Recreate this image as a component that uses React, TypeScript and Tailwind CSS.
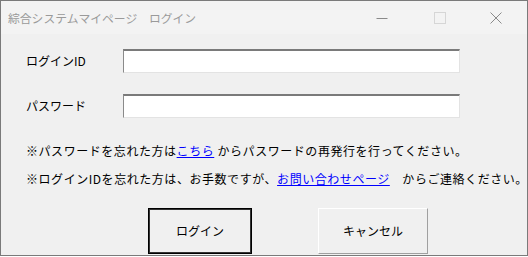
import React from 'react';

const font = { fontFamily: '"Noto Sans CJK JP", "Noto Sans", sans-serif' };

function TitleBar() {
  return (
    <div className="flex h-[33px] items-center bg-[#f3f3f3]">
      <span className="pl-[7px] text-[11.8px] text-[#9a9a9a]">綜合システムマイページ　ログイン</span>
      <div className="ml-auto flex items-center">
        <div className="flex w-[58px] justify-center">
          <svg width="12" height="12" viewBox="0 0 12 12">
            <path d="M0.5 6.5h11" stroke="#8a8a8a" strokeWidth="1" />
          </svg>
        </div>
        <div className="flex w-[58px] justify-center">
          <svg width="12" height="12" viewBox="0 0 12 12">
            <rect x="0.5" y="0.5" width="11" height="11" fill="none" stroke="#d6d6d6" strokeWidth="1" />
          </svg>
        </div>
        <div className="flex w-[58px] justify-center pr-[4px]">
          <svg width="12" height="12" viewBox="0 0 12 12">
            <path d="M0.5 0.5l11 11M11.5 0.5l-11 11" stroke="#8a8a8a" strokeWidth="1" />
          </svg>
        </div>
      </div>
    </div>
  );
}

function Field({ label }: { label: string }) {
  return (
    <div className="flex items-center">
      <span className="w-[97px] text-[12px] text-black">{label}</span>
      <div className="h-[24px] w-[337px] border-t-2 border-l border-r border-b border-t-[#7a7a7a] border-l-[#8a8a8a] border-r-[#e3e3e3] border-b-[#e3e3e3] bg-white" />
    </div>
  );
}

export default function App() {
  return (
    <div style={font} className="h-[257px] w-[528px] overflow-hidden bg-white">
      <div className="flex h-[256px] w-[528px] flex-col overflow-hidden border border-[#7a7a7a] bg-[#f0f0f0]">
        <TitleBar />
        <div className="flex flex-col gap-[21px] pl-[25px] pt-[15px]">
          <Field label="ログインID" />
          <Field label="パスワード" />
        </div>
        <div className="mt-[24px] flex flex-col gap-[10px] pl-[25px] text-[12px] leading-[18px] tracking-[0.55px] text-black">
          <p className="whitespace-nowrap">
            ※パスワードを忘れた方は<span className="text-[#0000ff] underline">こちら</span> からパスワードの再発行を行ってください。
          </p>
          <p className="whitespace-nowrap">
            ※ログインIDを忘れた方は、お手数ですが、<span className="text-[#0000ff] underline">お問い合わせページ</span>　からご連絡ください。
          </p>
        </div>
        <div className="mt-[20px] flex pl-[147px]">
          <button className="h-[46px] w-[104px] shrink-0 border border-black bg-[#f0f0f0] text-[12px] text-black outline outline-1 -outline-offset-2 outline-[#333]">
            ログイン
          </button>
          <button className="ml-[66px] h-[46px] w-[110px] shrink-0 border border-t-white border-l-white border-r-[#a0a0a0] border-b-[#a0a0a0] bg-[#f0f0f0] text-[12px] text-black">
            キャンセル
          </button>
        </div>
      </div>
    </div>
  );
}
